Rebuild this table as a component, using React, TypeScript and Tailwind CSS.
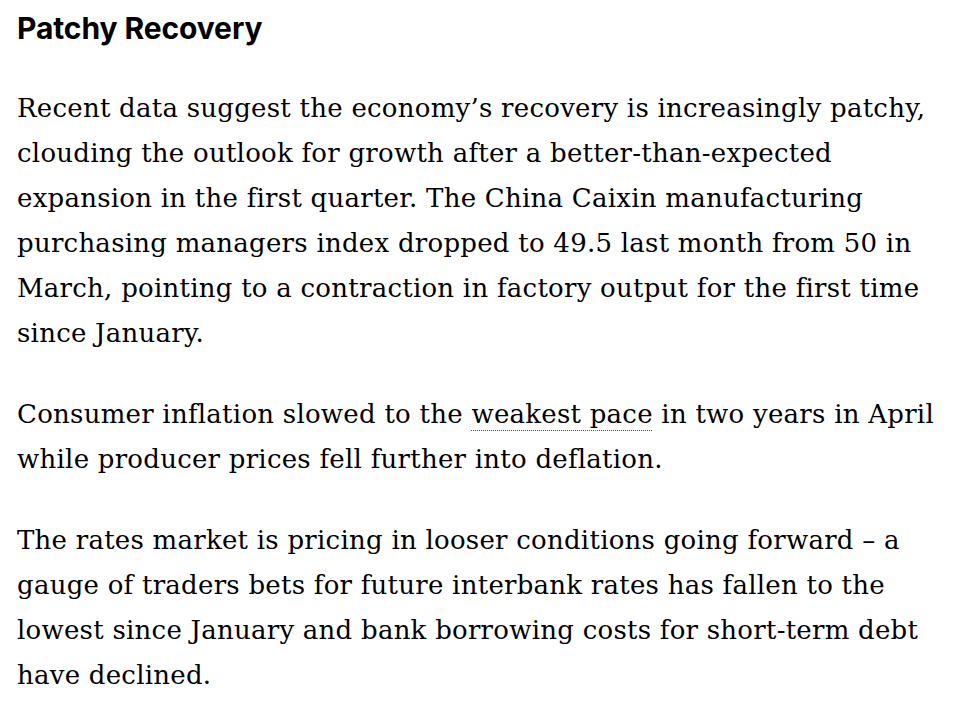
const serif = "font-['DejaVu_Serif',serif]";

const Paragraph = ({ children }: { children: React.ReactNode }) => {
  return (
    <p className={`${serif} text-[26px] leading-[45px] tracking-[0.25px] text-black`}>
      {children}
    </p>
  );
};

export default function App() {
  return (
    <div className="bg-white min-h-[709px] px-[17px] pt-[10px]">
      <h2 className="font-['Inter',sans-serif] font-bold text-[30px] leading-[36px] tracking-[-0.1px] text-black">
        Patchy Recovery
      </h2>
      <div className="mt-[40px] flex flex-col gap-[36px]">
        <Paragraph>
          Recent data suggest the economy’s recovery is increasingly patchy, clouding the outlook for
          growth after a better-than-expected expansion in the first quarter. The China Caixin
          manufacturing purchasing managers index dropped to 49.5 last month from 50 in March,
          pointing to a contraction in factory output for the first time since January.
        </Paragraph>
        <Paragraph>
          Consumer inflation slowed to the{" "}
          <a className="underline decoration-dotted decoration-gray-600 decoration-1 underline-offset-[7px]">
            weakest pace
          </a>{" "}
          in two years in April while producer prices fell further into deflation.
        </Paragraph>
        <Paragraph>
          The rates market is pricing in looser conditions going forward – a gauge of traders bets for
          future interbank rates has fallen to the lowest since January and bank borrowing costs for
          short-term debt have declined.
        </Paragraph>
      </div>
    </div>
  );
}
